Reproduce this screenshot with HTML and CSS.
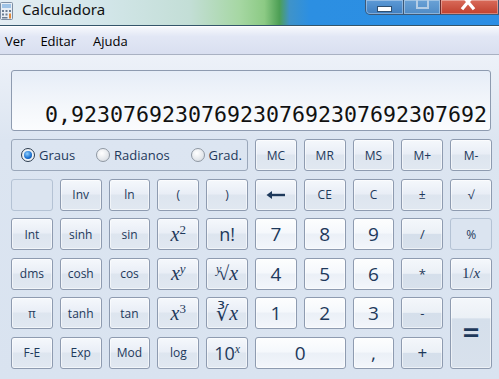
FILE: index.html
```html
<!DOCTYPE html>
<html lang="pt">
<head>
  <meta charset="UTF-8">
  <title>Calculadora</title>
  <link rel="stylesheet" href="styles.css">
</head>
<body>
  <header class="titlebar">
    <svg class="app-icon" width="14" height="20" viewBox="0 0 14 20">
      <rect x="0.5" y="1.5" width="12" height="17" rx="1" fill="#e8eef5" stroke="#7d8ea3"/>
      <rect x="2" y="3" width="9" height="4" fill="#9fc3e6"/>
      <rect x="2" y="9" width="2" height="2" fill="#6b7d92"/>
      <rect x="5.5" y="9" width="2" height="2" fill="#6b7d92"/>
      <rect x="9" y="9" width="2" height="2" fill="#6b7d92"/>
      <rect x="2" y="12.5" width="2" height="2" fill="#6b7d92"/>
      <rect x="5.5" y="12.5" width="2" height="2" fill="#6b7d92"/>
      <rect x="9" y="12.5" width="2" height="5" fill="#e08a3a"/>
      <rect x="2" y="16" width="5.5" height="1.5" fill="#6b7d92"/>
    </svg>
    <span class="title">Calculadora</span>
    <div class="winbtns">
      <span class="wb min"><i></i></span>
      <span class="wb max"><i></i></span>
      <span class="wb close">
        <svg width="20" height="14" viewBox="0 0 20 14"><path d="M3 -4 L13 8 M13 -4 L3 8" stroke="#fff" stroke-width="3.2" stroke-linecap="square"/></svg>
      </span>
    </div>
  </header>

  <nav class="menubar">
    <span>Ver</span>
    <span>Editar</span>
    <span>Ajuda</span>
  </nav>

  <main class="calc">
    <div class="display">0,92307692307692307692307692307692</div>

    <div class="keys">
      <div class="angle">
        <label><span class="radio on"></span>Graus</label>
        <label><span class="radio"></span>Radianos</label>
        <label><span class="radio"></span>Grad.</label>
      </div>
      <button>MC</button>
      <button>MR</button>
      <button>MS</button>
      <button>M+</button>
      <button>M-</button>

      <button class="off"></button>
      <button>Inv</button>
      <button>ln</button>
      <button>(</button>
      <button>)</button>
      <button class="back">
        <svg width="20" height="10" viewBox="0 0 20 10"><path d="M3 5 H19" stroke="#1e395b" stroke-width="2.4"/><path d="M0.5 5 L6 1 V9 Z" fill="#1e395b"/></svg>
      </button>
      <button>CE</button>
      <button>C</button>
      <button>±</button>
      <button>√</button>

      <button>Int</button>
      <button>sinh</button>
      <button>sin</button>
      <button class="math"><span><i>x</i><sup>2</sup></span></button>
      <button class="big">n!</button>
      <button class="num">7</button>
      <button class="num">8</button>
      <button class="num">9</button>
      <button class="op">/</button>
      <button class="off">%</button>

      <button>dms</button>
      <button>cosh</button>
      <button>cos</button>
      <button class="math"><span><i>x</i><sup><i>y</i></sup></span></button>
      <button class="math"><span><sup class="idx"><i>y</i></sup>√<i>x</i></span></button>
      <button class="num">4</button>
      <button class="num">5</button>
      <button class="num">6</button>
      <button class="op">*</button>
      <button class="math small"><span>1/<i>x</i></span></button>

      <button>π</button>
      <button>tanh</button>
      <button>tan</button>
      <button class="math"><span><i>x</i><sup>3</sup></span></button>
      <button class="math"><span>∛<i>x</i></span></button>
      <button class="num">1</button>
      <button class="num">2</button>
      <button class="num">3</button>
      <button class="op">-</button>
      <button class="op equals">=</button>

      <button>F-E</button>
      <button>Exp</button>
      <button>Mod</button>
      <button>log</button>
      <button class="big"><span>10<sup><i>x</i></sup></span></button>
      <button class="num zero">0</button>
      <button class="num">,</button>
      <button class="op plus">+</button>
    </div>
  </main>
</body>
</html>
```

FILE: styles.css
```css
body {
  margin: 0;
  font-family: "Open Sans", "Noto Sans", sans-serif;
  background: linear-gradient(to bottom, #eef2f9 50px, #dce5f1 140px, #d9e3f0);
  color: #1e395b;
  height: 379px;
  overflow: hidden;
}

.titlebar {
  height: 25px;
  display: flex;
  align-items: flex-start;
  background: linear-gradient(to right, #e4edf3 0%, #d3e6ea 20%, #c3ded6 38%, #a6d7a3 48%, #8cca84 53%, #4d9f55 56%, #3f93c9 58%, #2c8fe2 62%, #2b8ee4 100%);
  border-bottom: 1px solid #34556a;
  box-shadow: 0 1px 0 #ffffff;
}
.app-icon {
  margin: 1px 8px 0 0;
  flex: none;
}
.title {
  font-family: "Noto Sans", "Open Sans", sans-serif;
  font-size: 15px;
  line-height: 19px;
  color: #111;
}
.winbtns {
  margin-left: auto;
  display: flex;
  height: 14px;
  border: 1px solid #3d5876;
  border-top: none;
  border-radius: 0 0 0 5px;
  overflow: hidden;
}
.wb {
  display: flex;
  justify-content: center;
  align-items: flex-start;
  height: 14px;
  box-shadow: inset 0 0 0 1px rgba(255, 255, 255, 0.35);
}
.wb.min {
  width: 37px;
  background: linear-gradient(#5d9ad6, #3f7ec0);
  border-radius: 0 0 0 4px;
}
.wb.min i {
  width: 13px;
  height: 4px;
  margin-top: 6px;
  background: #fff;
  border: 1px solid #2f4f70;
}
.wb.max {
  width: 36px;
  background: linear-gradient(#6aa2d6, #4f8bc6);
  border-left: 1px solid #3d5876;
}
.wb.max i {
  width: 9px;
  height: 9px;
  margin-top: -2px;
  border: 2px solid #b4cde5;
  border-top: none;
}
.wb.close {
  width: 57px;
  background: linear-gradient(#d96b5a, #c0402e);
  border-left: 1px solid #6b2b2b;
}

.menubar {
  height: 27px;
  display: flex;
  align-items: center;
  gap: 15px;
  padding: 0 5px;
  margin-top: 1px;
  background: linear-gradient(#f6f8fc, #e2e7f5 35%, #d9dff0);
  border-bottom: 1px solid #a9b1c2;
  font-size: 13px;
  color: #000;
}
.menubar span:last-child {
  margin-left: 2px;
}

.calc {
  padding: 15px 8px 0 11px;
}

.display {
  height: 61px;
  box-sizing: border-box;
  border: 1px solid #8e9bb0;
  border-radius: 3px;
  background: linear-gradient(#e6edf7, #f4f7fb 60%, #fbfcfe);
  font-family: "DejaVu Sans Mono", monospace;
  font-size: 21.6px;
  line-height: 1;
  color: #111;
  text-align: right;
  padding: 33px 3px 0 0;
  overflow: hidden;
  white-space: nowrap;
}

.keys {
  margin-top: 8px;
  display: grid;
  grid-template-columns: repeat(10, 1fr);
  grid-template-rows: repeat(6, 32px);
  column-gap: 7px;
  row-gap: 7.6px;
  width: 481px;
}

.angle {
  grid-column: span 5;
  display: flex;
  align-items: center;
  justify-content: space-between;
  padding: 0 5px 0 9px;
  border: 1px solid #9aa7ba;
  border-radius: 3px;
  font-size: 13px;
  color: #1e395b;
}
.angle label {
  display: flex;
  align-items: center;
  gap: 4px;
}
.radio {
  width: 12px;
  height: 12px;
  border-radius: 50%;
  border: 1px solid #8f98a3;
  background: radial-gradient(circle at 40% 35%, #ffffff, #dfe3e8 70%, #c8ced6);
  position: relative;
}
.radio.on {
  border-color: #2c3c4f;
  background: #eef2f6;
}
.radio.on::after {
  content: "";
  position: absolute;
  left: 2px;
  top: 2px;
  width: 8px;
  height: 8px;
  border-radius: 50%;
  background: radial-gradient(circle at 40% 35%, #8fd0ff, #1a6fcf 60%, #0d3f86);
}

button {
  font-family: "Open Sans", "Noto Sans", sans-serif;
  font-size: 12px;
  color: #1e395b;
  padding: 0;
  border: 1px solid #8e9bb0;
  border-radius: 3px;
  background: linear-gradient(#f5f8fc 0%, #e9eef6 45%, #dde5ef 52%, #e1e8f1 100%);
  box-shadow: inset 0 0 0 1px rgba(255, 255, 255, 0.55);
  display: flex;
  align-items: center;
  justify-content: center;
}
button.off {
  background: #dbe4f0;
  border-color: #b4c2d4;
  box-shadow: none;
}
button.num {
  font-size: 19px;
  background: linear-gradient(#fdfefe 0%, #f5f8fc 45%, #ebf0f7 52%, #f3f6fb 100%);
}
button.op {
  font-size: 13px;
  background: linear-gradient(#f4f7fb 0%, #ebf0f6 48%, #d5dfeb 50%, #d8e1ec 100%);
}
button.op.plus {
  font-size: 17px;
}
button.equals {
  grid-row: span 2;
  font-size: 30px;
  font-weight: 600;
  align-items: flex-start;
  padding-top: 14px;
  background: linear-gradient(#f4f7fb 0%, #ebf0f6 28%, #d5dfeb 30%, #d8e1ec 100%);
}
button.zero {
  grid-column: span 2;
}
button.big {
  font-size: 18px;
}
button.math {
  font-family: "Liberation Serif", serif;
  font-size: 20px;
}
button.math.small {
  font-size: 15px;
}
button sup {
  font-size: 13px;
  vertical-align: 7px;
  line-height: 0;
}
button sup.idx {
  font-size: 12px;
  margin-right: -3px;
  vertical-align: 7px;
}
button.big sup {
  font-family: "Liberation Serif", serif;
  font-size: 12px;
}
```
